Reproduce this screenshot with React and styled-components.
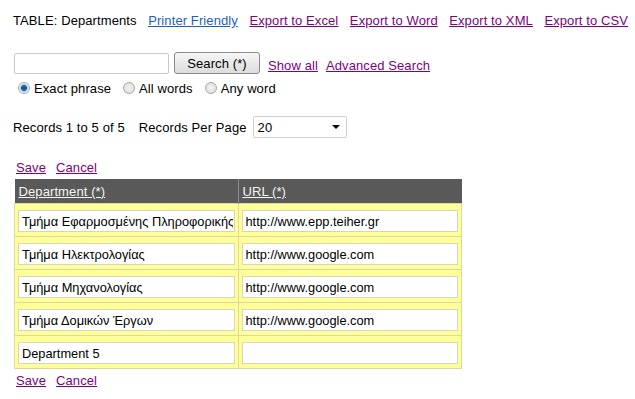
import React from "react";
import styled, { createGlobalStyle } from "styled-components";

const GlobalStyle = createGlobalStyle`
  body {
    margin: 0;
    background: #fff;
    font-family: "Liberation Sans", Arial, sans-serif;
    font-size: 13px;
    letter-spacing: 0.1px;
    color: #000;
  }
`;

const Page = styled.div`
  padding: 13px 0 0 13px;
  width: 622px;
`;

const TopBar = styled.div`
  display: flex;
  align-items: baseline;
  gap: 11.5px;
  height: 18px;
`;

const Link = styled.a`
  color: ${(p) => (p.$blue ? "#1d5fc9" : "#800080")};
  text-decoration: underline;
  cursor: pointer;
`;

const SearchRow = styled.div`
  display: flex;
  align-items: center;
  margin-top: 21px;
  padding-left: 1px;
  height: 22px;
`;

const SearchInput = styled.input`
  box-sizing: border-box;
  width: 155px;
  height: 21px;
  border: 1px solid #c8c8c8;
  border-radius: 2px;
  margin: 1px 0 0 0;
`;

const Button = styled.button`
  box-sizing: border-box;
  margin-left: 5px;
  width: 86px;
  height: 22px;
  font-family: inherit;
  font-size: 13px;
  letter-spacing: 0.1px;
  border: 1px solid #8a8a8a;
  border-radius: 3px;
  background: linear-gradient(#f6f6f6, #dcdcdc);
  color: #000;
  padding: 0;
`;

const SearchLinks = styled.div`
  display: flex;
  gap: 8px;
  margin: 5px 0 0 8px;
`;

const RadioRow = styled.div`
  display: flex;
  align-items: center;
  margin-top: 6px;
  padding-left: 5px;
  height: 16px;
`;

const RadioItem = styled.label`
  display: flex;
  align-items: center;
  gap: 4px;
  margin-right: ${(p) => p.$gap}px;
`;

const Dot = styled.span`
  box-sizing: border-box;
  width: 12px;
  height: 12px;
  border-radius: 50%;
  border: 1px solid #a8a8a8;
  background: ${(p) =>
    p.$on
      ? "radial-gradient(circle, #1c5a8e 0 2.5px, #7ab0d8 3px, #e8f0f6 4.5px)"
      : "radial-gradient(circle, #f4f4f4, #d8d8d8)"};
`;

const RecordsRow = styled.div`
  display: flex;
  align-items: center;
  margin-top: 20px;
  height: 22px;
`;

const PerPage = styled.span`
  margin-left: 14px;
`;

const Select = styled.div`
  box-sizing: border-box;
  display: flex;
  align-items: center;
  justify-content: space-between;
  width: 94px;
  height: 22px;
  margin-left: 6px;
  padding: 0 6px 0 4px;
  border: 1px solid #d0d0d0;
  border-radius: 2px;
`;

const Arrow = styled.span`
  width: 0;
  height: 0;
  border-left: 4px solid transparent;
  border-right: 4px solid transparent;
  border-top: 4px solid #000;
`;

const Actions = styled.div`
  display: flex;
  gap: 10px;
  padding-left: 3px;
  margin-top: ${(p) => p.$top}px;
  height: 15px;
  line-height: 15px;
`;

const Table = styled.table`
  border-collapse: collapse;
  width: 448px;
  margin: 4px 0 0 1px;
`;

const Head = styled.th`
  background: #595959;
  color: #f4f4f4;
  font-weight: normal;
  text-align: left;
  height: 24px;
  padding: 0 0 0 4px;
  border-left: ${(p) => (p.$first ? "none" : "1px solid #8a8a8a")};
  text-decoration: underline;
  width: 50%;
`;

const Cell = styled.td`
  background: #ffff99;
  border: 1px solid #ddd99a;
  padding: 6px 3px 4px 3px;
  height: 22px;
`;

const CellInput = styled.input`
  box-sizing: border-box;
  width: 100%;
  height: 22px;
  border: 1px solid #d6d6c0;
  font-family: "Liberation Sans", Arial, sans-serif;
  font-size: 12.8px;
  letter-spacing: 0;
  padding: 0 1px 0 3px;
  margin: 0;
  display: block;
  color: #000;
`;

const rows = [
  ["Τμήμα Εφαρμοσμένης Πληροφορικής", "http://www.epp.teiher.gr"],
  ["Τμήμα Ηλεκτρολογίας", "http://www.google.com"],
  ["Τμήμα Μηχανολογίας", "http://www.google.com"],
  ["Τμήμα Δομικών Έργων", "http://www.google.com"],
  ["Department 5", ""],
];

export default function App() {
  return (
    <>
      <GlobalStyle />
      <Page>
        <TopBar>
          <span>TABLE: Departments</span>
          <Link $blue>Printer Friendly</Link>
          <Link>Export to Excel</Link>
          <Link>Export to Word</Link>
          <Link>Export to XML</Link>
          <Link>Export to CSV</Link>
        </TopBar>
        <SearchRow>
          <SearchInput />
          <Button>Search (*)</Button>
          <SearchLinks>
            <Link>Show all</Link>
            <Link>Advanced Search</Link>
          </SearchLinks>
        </SearchRow>
        <RadioRow>
          <RadioItem $gap={12}>
            <Dot $on />
            Exact phrase
          </RadioItem>
          <RadioItem $gap={12}>
            <Dot />
            All words
          </RadioItem>
          <RadioItem $gap={0}>
            <Dot />
            Any word
          </RadioItem>
        </RadioRow>
        <RecordsRow>
          <span>Records 1 to 5 of 5</span>
          <PerPage>Records Per Page</PerPage>
          <Select>
            <span>20</span>
            <Arrow />
          </Select>
        </RecordsRow>
        <Actions $top={22}>
          <Link>Save</Link>
          <Link>Cancel</Link>
        </Actions>
        <Table>
          <thead>
            <tr>
              <Head $first>Department (*)</Head>
              <Head>URL (*)</Head>
            </tr>
          </thead>
          <tbody>
            {rows.map(([dep, url]) => (
              <tr key={dep}>
                <Cell>
                  <CellInput readOnly value={dep} />
                </Cell>
                <Cell>
                  <CellInput readOnly value={url} />
                </Cell>
              </tr>
            ))}
          </tbody>
        </Table>
        <Actions $top={4}>
          <Link>Save</Link>
          <Link>Cancel</Link>
        </Actions>
      </Page>
    </>
  );
}
